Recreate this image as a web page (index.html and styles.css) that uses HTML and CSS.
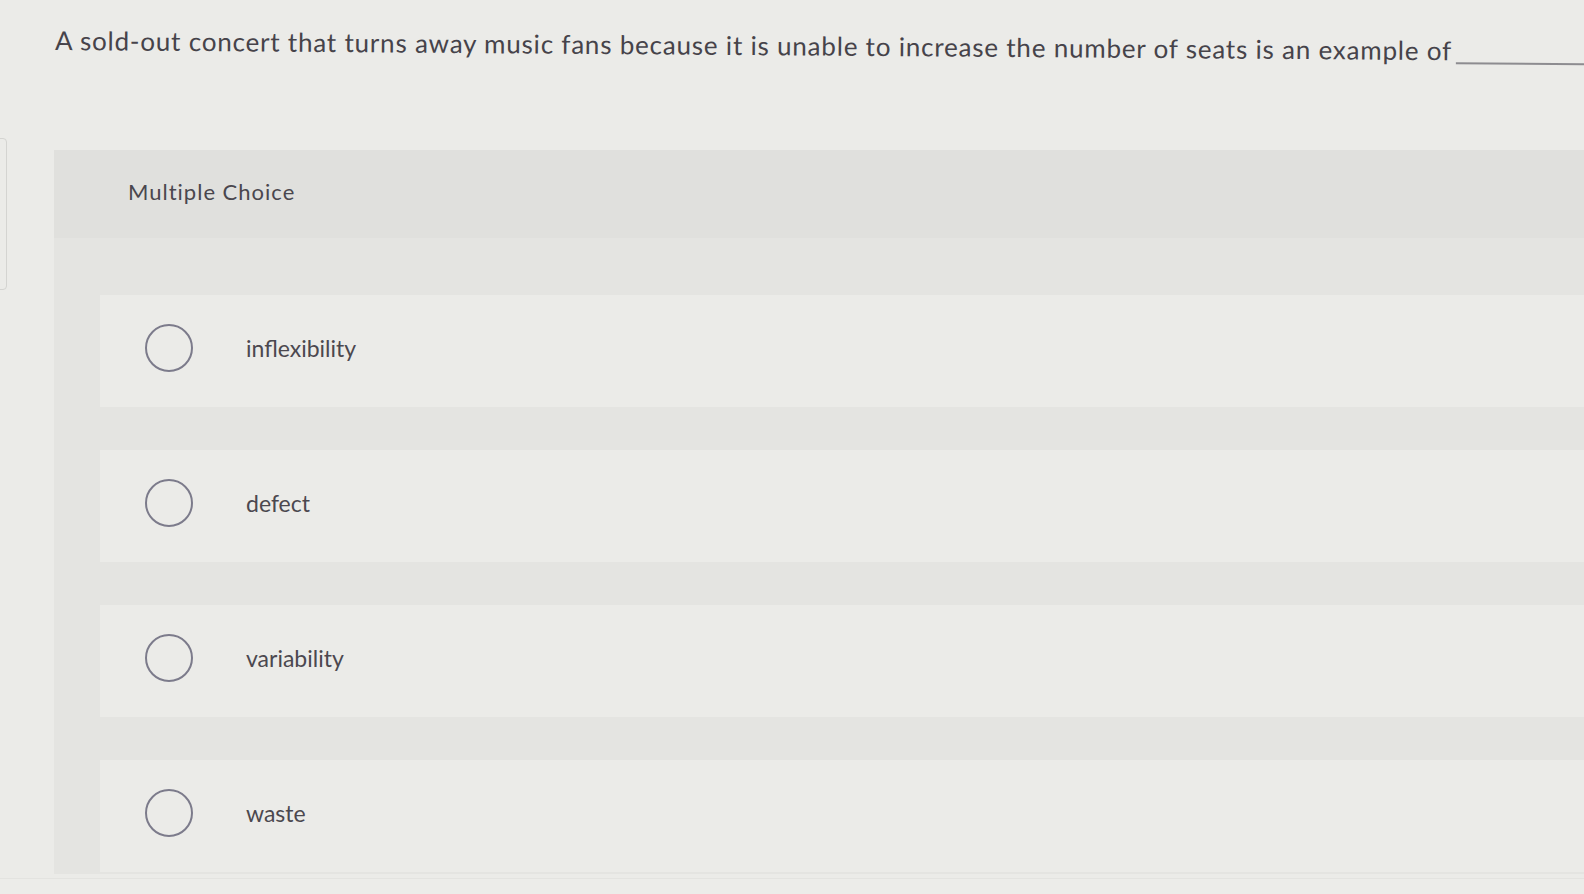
FILE: index.html
```html
<!DOCTYPE html>
<html lang="en">
<head>
<meta charset="utf-8">
<title>Multiple Choice</title>
<link rel="stylesheet" href="styles.css">
</head>
<body>
<div class="side-tab"></div>
<main class="page">
  <div class="question-wrap">
    <p class="question">A sold-out concert that turns away music fans because it is unable to increase the number of seats is an example of<span class="blank"></span></p>
  </div>
  <section class="panel">
    <div class="panel-head">Multiple Choice</div>
    <div class="panel-spacer"></div>
    <ul class="options">
      <li class="option"><span class="radio"></span><span class="label">inflexibility</span></li>
      <li class="option"><span class="radio"></span><span class="label">defect</span></li>
      <li class="option"><span class="radio"></span><span class="label">variability</span></li>
      <li class="option"><span class="radio"></span><span class="label">waste</span></li>
    </ul>
  </section>
  <div class="foot"></div>
</main>
</body>
</html>
```

FILE: styles.css
```css
html, body {
  margin: 0;
  padding: 0;
  width: 1584px;
  height: 894px;
  overflow: hidden;
  background: #ebebe8;
  font-family: "Lato", "Open Sans", sans-serif;
  color: #48454c;
}

.side-tab {
  position: absolute;
  left: -10px;
  top: 138px;
  width: 15px;
  height: 150px;
  border: 1px solid #d4d4d1;
  border-radius: 4px;
}

.page {
  display: flex;
  flex-direction: column;
}

.question-wrap {
  height: 150px;
  overflow: hidden;
}

.question {
  margin: 0;
  padding: 25px 0 0 55px;
  font-size: 26px;
  line-height: 30px;
  letter-spacing: 0.8px;
  white-space: nowrap;
  color: #46434a;
  transform: rotate(0.42deg);
  transform-origin: 55px 40px;
}

.blank {
  display: inline-block;
  width: 240px;
  height: 20px;
  margin-left: 4px;
  border-bottom: 2px solid #8d8c90;
  vertical-align: -4px;
}

.panel {
  margin-left: 54px;
  background: #e4e4e1;
  height: 724px;
  display: flex;
  flex-direction: column;
}

.panel-head {
  height: 88px;
  box-sizing: border-box;
  padding: 28px 0 0 74px;
  font-size: 22px;
  line-height: 28px;
  letter-spacing: 1px;
  color: #4a474e;
  background: #e0e0dd;
}

.panel-spacer {
  height: 57px;
}

.options {
  list-style: none;
  margin: 0;
  padding: 0 0 0 46px;
  display: flex;
  flex-direction: column;
  gap: 43px;
}

.option {
  height: 112px;
  background: #ebebe8;
  display: flex;
  align-items: center;
  padding-left: 45px;
}

.radio {
  width: 44px;
  height: 44px;
  border: 2px solid #7c7b8b;
  border-radius: 50%;
  flex: none;
  margin-top: -6px;
}

.label {
  margin-left: 53px;
  font-size: 23px;
  color: #4b484f;
  margin-top: -6px;
}

.foot {
  height: 20px;
  border-top: 1px solid #e3e3e0;
  margin-top: 4px;
  background: #ecece9;
}
```
